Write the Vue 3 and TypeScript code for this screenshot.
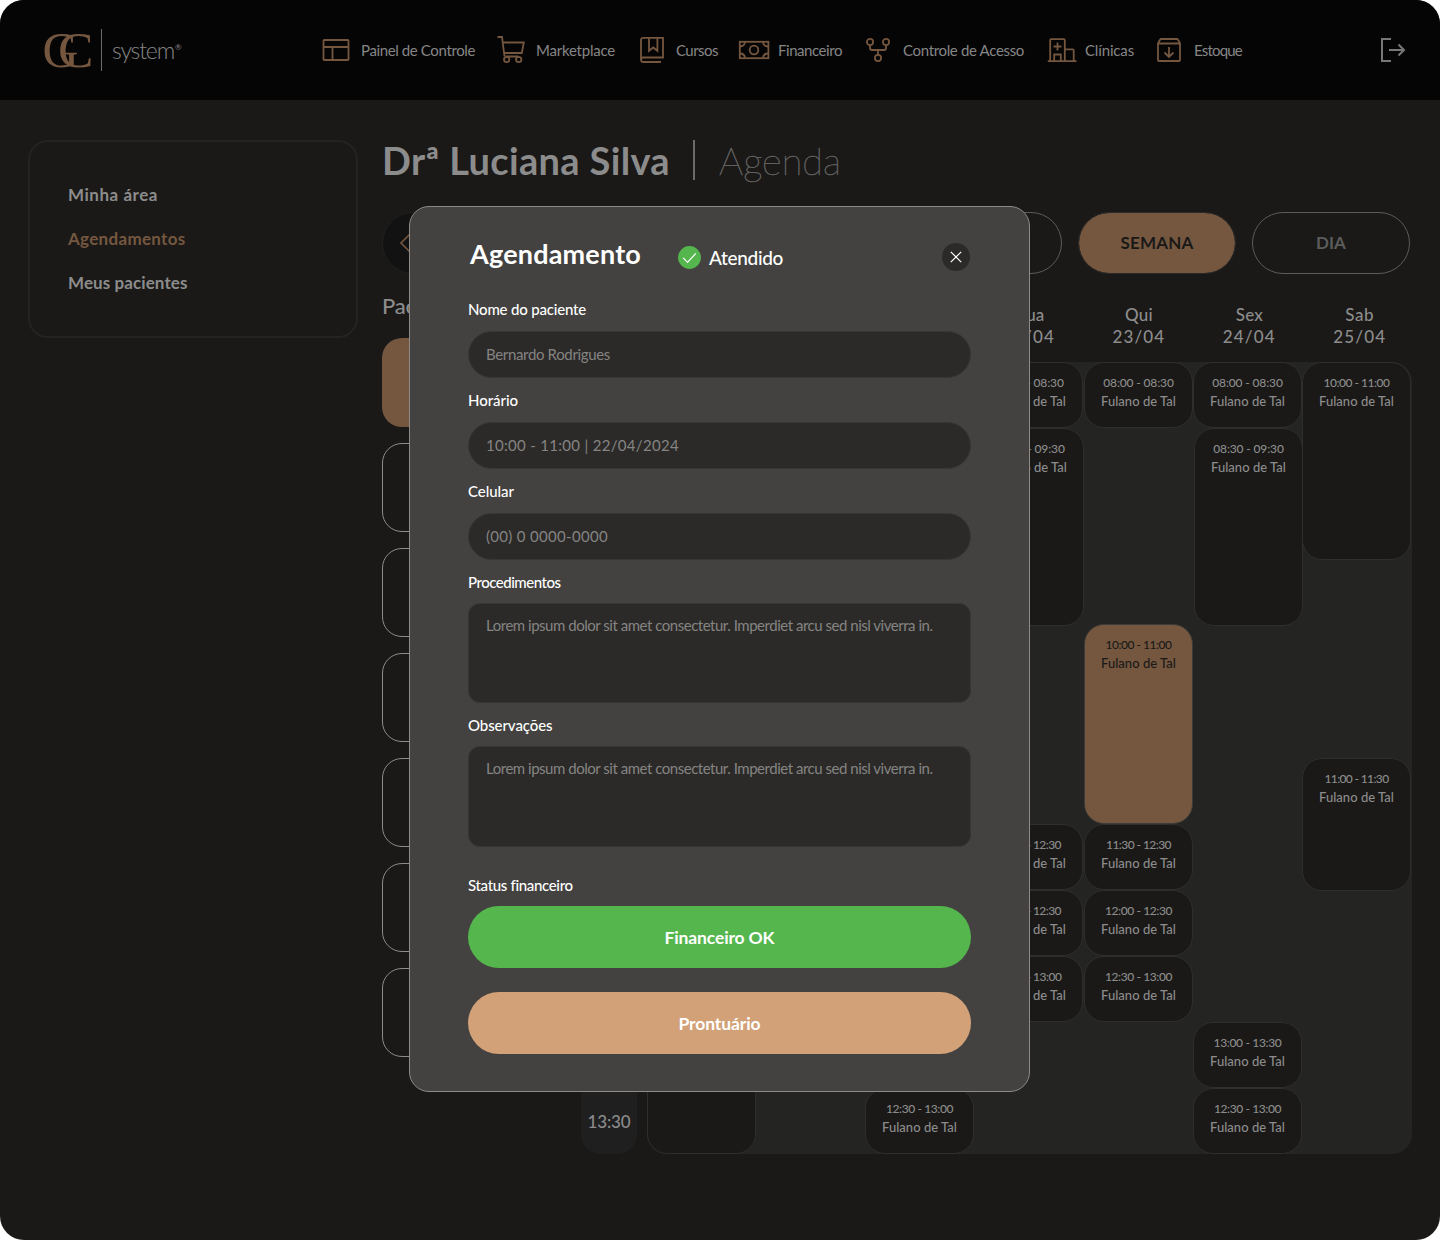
<script setup lang="ts">
interface NavItem { label: string; icon: string; box: number; gap: number; width: number; before: number }
interface Slot { day: number; row: number; span: number; time: string; timeWidth?: number; active?: boolean; shift?: boolean; blank?: boolean }

// Tracks a line of text so that it fills the given width in pixels.
const vFit = {
  mounted(el: HTMLElement, binding: { value: number }) {
    const range = document.createRange()
    range.selectNodeContents(el)
    const natural = range.getBoundingClientRect().width
    const count = (el.textContent ?? '').trim().length
    if (count) el.style.letterSpacing = `${((binding.value - natural) / count).toFixed(3)}px`
  },
}

const nav: NavItem[] = [
  { label: 'Painel de Controle', icon: 'panel', box: 28, gap: 11, width: 114, before: 0 },
  { label: 'Marketplace', icon: 'cart', box: 30, gap: 10, width: 79, before: 21 },
  { label: 'Cursos', icon: 'book', box: 26, gap: 11, width: 42, before: 24 },
  { label: 'Financeiro', icon: 'money', box: 32, gap: 8, width: 64, before: 20 },
  { label: 'Controle de Acesso', icon: 'fork', box: 26, gap: 12, width: 121, before: 23 },
  { label: 'Clínicas', icon: 'clinic', box: 30, gap: 8, width: 49, before: 23 },
  { label: 'Estoque', icon: 'box', box: 26, gap: 12, width: 48, before: 22 },
]

const menu = [
  { label: 'Minha área', width: 90, active: false },
  { label: 'Agendamentos', width: 117.5, active: true },
  { label: 'Meus pacientes', width: 119.5, active: false },
]

const days = [
  { name: 'Dom', date: '19/04' },
  { name: 'Seg', date: '20/04' },
  { name: 'Ter', date: '21/04' },
  { name: 'Qua', date: '22/04' },
  { name: 'Qui', date: '23/04' },
  { name: 'Sex', date: '24/04' },
  { name: 'Sab', date: '25/04' },
]
const nameWidths: Record<string, number> = { Qui: 28, Sex: 27, Sab: 29, Qua: 32 }

const hours = ['08:00', '08:30', '09:00', '09:30', '10:00', '10:30', '11:00', '11:30', '12:00', '12:30', '13:00', '13:30']

const slots: Slot[] = [
  { day: 1, row: 10, span: 3, time: '', blank: true },
  { day: 3, row: 12, span: 1, time: '12:30 - 13:00', timeWidth: 67 },
  { day: 4, row: 1, span: 1, time: '08:00 - 08:30' },
  { day: 4, row: 2, span: 3, time: '08:30 - 09:30', shift: true },
  { day: 4, row: 8, span: 1, time: '11:30 - 12:30', timeWidth: 65 },
  { day: 4, row: 9, span: 1, time: '12:00 - 12:30', timeWidth: 65 },
  { day: 4, row: 10, span: 1, time: '12:30 - 13:00', timeWidth: 66 },
  { day: 5, row: 1, span: 1, time: '08:00 - 08:30' },
  { day: 5, row: 5, span: 3, time: '10:00 - 11:00', timeWidth: 66, active: true },
  { day: 5, row: 8, span: 1, time: '11:30 - 12:30', timeWidth: 65 },
  { day: 5, row: 9, span: 1, time: '12:00 - 12:30', timeWidth: 67 },
  { day: 5, row: 10, span: 1, time: '12:30 - 13:00', timeWidth: 67 },
  { day: 6, row: 1, span: 1, time: '08:00 - 08:30' },
  { day: 6, row: 2, span: 3, time: '08:30 - 09:30', shift: true },
  { day: 6, row: 11, span: 1, time: '13:00 - 13:30', timeWidth: 68 },
  { day: 6, row: 12, span: 1, time: '12:30 - 13:00', timeWidth: 67 },
  { day: 7, row: 1, span: 3, time: '10:00 - 11:00', timeWidth: 66 },
  { day: 7, row: 7, span: 2, time: '11:00 - 11:30', timeWidth: 64 },
]

const fields = [
  { label: 'Nome do paciente', labelWidth: 118, value: 'Bernardo Rodrigues', width: 124, area: false },
  { label: 'Horário', labelWidth: 50, value: '10:00 - 11:00 | 22/04/2024', width: 193, area: false },
  { label: 'Celular', labelWidth: 46, value: '(00) 0 0000-0000', width: 122, area: false },
  { label: 'Procedimentos', labelWidth: 92.5, value: 'Lorem ipsum dolor sit amet consectetur. Imperdiet arcu sed nisl viverra in.', width: 446.5, area: true },
  { label: 'Observações', labelWidth: 84.5, value: 'Lorem ipsum dolor sit amet consectetur. Imperdiet arcu sed nisl viverra in.', width: 446.5, area: true },
]
</script>

<template>
  <div class="screen">
    <header class="topbar">
      <div class="brand">
        <svg class="monogram" width="52" height="42" viewBox="0 0 52 42">
          <text x="-0.500" y="37.500" textLength="36" lengthAdjust="spacingAndGlyphs">G</text>
          <text x="15" y="37.500" textLength="35.500" lengthAdjust="spacingAndGlyphs">C</text>
        </svg>
        <i class="brand-rule"></i>
        <span v-fit="62" class="brand-name">system</span><sup class="reg">®</sup>
      </div>
      <nav class="nav">
        <a v-for="n in nav" :key="n.label" class="nav-item" :style="{ marginLeft: n.before + 'px' }">
          <span class="nav-icon" :style="{ width: n.box + 'px', marginRight: n.gap + 'px' }">
            <svg v-if="n.icon === 'panel'" width="28" height="24" viewBox="0 0 28 24"><rect x="1.5" y="2" width="25" height="20" rx=".8" /><path d="M1.5 9h25M10.5 9v13" /></svg>
            <svg v-else-if="n.icon === 'cart'" width="30" height="30" viewBox="0 0 30 30"><path d="M1.500 2H6l2.500 19.500M7 7.500h20.800l-2 10.500H8M9.500 21.500h13" /><circle cx="10.700" cy="24.500" r="2.700" /><circle cx="22.700" cy="24.500" r="2.700" /></svg>
            <svg v-else-if="n.icon === 'book'" width="26" height="28" viewBox="0 0 26 28"><path d="M22 26H4.200a2.200 2.200 0 0 1-2.200-2.200V4a2.200 2.200 0 0 1 2.200-2.200H24V21.500H4.200A2.200 2.200 0 0 0 2 23.700M10 1.800v13l4.200-3.300 4.200 3.300v-13" /></svg>
            <svg v-else-if="n.icon === 'money'" width="32" height="20" viewBox="0 0 32 20"><rect x="1.800" y="1.800" width="28.600" height="16.400" /><circle cx="16" cy="10" r="4.300" /><path d="M7 2.200a5 5 0 0 1-5 4.300M25 2.200a5 5 0 0 0 5 4.300M7 17.800a5 5 0 0 0-5-4.300M25 17.800a5 5 0 0 1 5-4.300" /></svg>
            <svg v-else-if="n.icon === 'fork'" width="26" height="26" viewBox="0 0 26 26"><circle cx="5" cy="5" r="3.100" /><circle cx="21" cy="5" r="3.100" /><circle cx="13" cy="21" r="3.100" /><path d="M5 8.200V11a2 2 0 0 0 2 2h12a2 2 0 0 0 2-2V8.200M13 13v4.800" /></svg>
            <svg v-else-if="n.icon === 'clinic'" width="30" height="26" viewBox="0 0 30 26"><path d="M.8 24.100h28.700M3.200 24V3.200a1 1 0 0 1 1-1h12.600a1 1 0 0 1 1 1V24M17.800 12.300h7.900a1 1 0 0 1 1 1V24M7.200 24v-6.500h6.600V24M10.500 5.500v8M6.500 9.500h8" /></svg>
            <svg v-else width="26" height="26" viewBox="0 0 26 26"><path d="M2 6.200 4.200 2.500a1 1 0 0 1 .9-.5h15.800a1 1 0 0 1 .9.500L24 6.200V23a1 1 0 0 1-1 1H3a1 1 0 0 1-1-1ZM2 6.500h22M13 10v9.500M8.500 15.500l4.500 4.500 4.500-4.500" /></svg>
          </span>
          <span v-fit="n.width" class="nav-label" :style="{ width: n.width + 'px' }">{{ n.label }}</span>
        </a>
      </nav>
      <svg class="logout" width="26" height="26" viewBox="0 0 26 26"><path d="M11 2H2v22h9M9 13h15M18.500 7.500 24 13l-5.500 5.500" /></svg>
    </header>

    <main class="body">
      <aside class="side">
        <a v-for="m in menu" :key="m.label" :class="{ on: m.active }"><span v-fit="m.width">{{ m.label }}</span></a>
      </aside>

      <section class="content">
        <div class="heading">
          <h1 v-fit="288">Drª Luciana Silva</h1>
          <i></i>
          <h2 v-fit="122">Agenda</h2>
        </div>
        <div class="controls">
          <div class="period">
            <svg width="14" height="22" viewBox="0 0 14 22"><path d="M11 2 2 11l9 9" /></svg>
          </div>
          <div class="views">
            <button class="view"></button>
            <button class="view on"><span v-fit="73">SEMANA</span></button>
            <button class="view"><span v-fit="30">DIA</span></button>
          </div>
        </div>
        <div class="columns">
          <div class="patients">
            <h3>Pacientes</h3>
            <div v-for="i in 7" :key="i" class="patient" :class="{ on: i === 1 }"></div>
          </div>
          <div class="agenda">
            <div class="hours">
              <div v-for="h in hours" :key="h" class="hour"><span v-fit="43">{{ h }}</span></div>
            </div>
            <div class="week">
              <div class="days">
                <div v-for="d in days" :key="d.name" class="day">
                  <span v-fit="nameWidths[d.name] ?? 30">{{ d.name }}</span>
                  <span v-fit="53">{{ d.date }}</span>
                </div>
              </div>
              <div class="slots">
                <div
                  v-for="(s, i) in slots"
                  :key="i"
                  class="slot"
                  :class="{ active: s.active, shift: s.shift, last: s.day === 7, tall: s.span === 2 }"
                  :style="{ gridColumn: s.day, gridRow: `${s.row} / span ${s.span}` }"
                >
                  <template v-if="!s.blank">
                    <span v-fit="s.timeWidth ?? 70.5" class="time">{{ s.time }}</span>
                    <span v-fit="75" class="who">Fulano de Tal</span>
                  </template>
                </div>
              </div>
            </div>
          </div>
        </div>
      </section>
    </main>

    <div class="modal" role="dialog">
      <div class="modal-head">
        <h2 v-fit="171">Agendamento</h2>
        <div class="status">
          <svg width="23" height="23" viewBox="0 0 23 23"><circle cx="11.500" cy="11.500" r="11.400" fill="#54b64d" /><path d="m5.200 11.800 4.300 4.500 8.300-8.900" fill="none" stroke="#fff" stroke-width="1.200" /></svg>
          <span v-fit="74">Atendido</span>
        </div>
        <button class="close">
          <svg width="12" height="12" viewBox="0 0 12 12"><path d="m.8.800 10.400 10.400M11.200.800.800 11.200" /></svg>
        </button>
      </div>
      <template v-for="f in fields" :key="f.label">
        <label class="label"><span v-fit="f.labelWidth">{{ f.label }}</span></label>
        <div class="input" :class="{ area: f.area }"><span v-fit="f.width">{{ f.value }}</span></div>
      </template>
      <label class="label finance"><span v-fit="104.500">Status financeiro</span></label>
      <button class="action ok"><span v-fit="110">Financeiro OK</span></button>
      <button class="action record"><span v-fit="82">Prontuário</span></button>
    </div>
  </div>
</template>

<style>
body { background: #fff; }
</style>

<style scoped>
* { box-sizing: border-box; }
.screen {
  position: relative;
  width: 1440px;
  height: 1240px;
  overflow: hidden;
  border-radius: 24px;
  background: #1a1917;
  color: #8c8c8c;
  font-family: Lato, "Liberation Sans", sans-serif;
  white-space: nowrap;
}
h1, h2, h3 { margin: 0; }
button { padding: 0; border: 0; background: none; font: inherit; color: inherit; }
svg { display: block; flex: none; }

.topbar { display: flex; align-items: center; height: 100px; background: #050505; }
.brand { display: flex; align-items: center; width: 322px; padding-left: 43px; }
.monogram { overflow: visible; fill: #755740; font-family: "Liberation Serif", serif; font-size: 50px; }
.brand-rule { width: 1px; height: 42px; margin: 0 10px 0 6px; background: #6a6a6a; }
.brand-name { width: 63px; font-size: 23px; font-weight: 300; color: #858585; line-height: 30px; }
.reg { font-size: 8px; line-height: 8px; margin: -7px 0 0 0; color: #858585; }
.nav { display: flex; align-items: center; }
.nav-item { display: flex; align-items: center; }
.nav-icon { display: flex; justify-content: center; flex: none; }
.nav-icon svg { fill: none; stroke: #755740; stroke-width: 1.800; }
.nav-label { font-size: 15px; line-height: 22px; color: #858585; }
.logout { margin-left: auto; margin-right: 34px; fill: none; stroke: #777; stroke-width: 2; }

.body { display: flex; align-items: flex-start; padding: 40px 0 0 28px; }
.side { width: 330px; height: 198px; padding: 31px 38px; border: 2px solid #232322; border-radius: 20px; }
.side a { display: block; height: 44px; line-height: 43px; font-size: 17px; font-weight: 700; }
.side .on { color: #755740; }

.content { width: 1030px; margin-left: 24px; }
.heading { display: flex; align-items: center; height: 40px; }
.heading h1 { width: 289px; font-size: 38px; line-height: 40px; font-weight: 700; }
.heading i { width: 2px; height: 40px; margin: 0 24px 0 22px; background: #6a6a6a; }
.heading h2 { font-size: 38px; line-height: 44px; font-weight: 100; color: #606060; -webkit-text-stroke: .6px #606060; }
.controls { display: flex; justify-content: space-between; margin: 32px 2px 0 0; }
.period { display: flex; align-items: center; width: 360px; height: 62px; padding-left: 16px; border: 1px solid #202020; border-radius: 31px; background: #121212; }
.period svg { fill: none; stroke: #755740; stroke-width: 1.600; }
.views { display: flex; gap: 16px; }
.view { width: 158px; height: 62px; padding-bottom: 1px; border: 1px solid #5c5b5a; border-radius: 31px; font-size: 17px; font-weight: 700; color: #5c5c5c; }
.view.on { border-color: #2b2a28; background: #755740; background-clip: padding-box; color: #1a1917; }

.columns { display: flex; justify-content: space-between; }
.patients { width: 183px; }
.patients h3 { height: 64px; padding-top: 17px; font-size: 22px; line-height: 30px; font-weight: 500; letter-spacing: -.2px; }
.patient { height: 89px; margin-bottom: 16px; border: 1px solid #8c8c8c; border-radius: 20px; }
.patient.on { border: 0; background: #755740; }
.agenda { display: flex; gap: 10px; }
.hours { width: 56px; height: 792px; margin-top: 88px; border-radius: 20px; background: #1f1f20; }
.hour { display: flex; align-items: center; justify-content: center; height: 66px; font-size: 17px; font-weight: 500; }
.days { display: flex; width: 773px; height: 88px; padding-top: 30px; margin-left: -5px; }
.day { display: flex; flex-direction: column; align-items: center; flex: 1; font-size: 17px; line-height: 22px; font-weight: 500; }
.week { width: 765px; }
.slots { display: grid; grid-template-columns: repeat(7, 1fr); grid-template-rows: repeat(12, 66px); height: 792px; border-radius: 20px; background: #242422; }
.slot { display: flex; flex-direction: column; align-items: center; width: 109px; padding-top: 11px; border: 1px solid #2e2e2d; border-radius: 20px; background: #1a1917; }
.slot.shift { margin-left: 1px; }
.slot.last { margin-left: -1px; }
.slot.tall { margin-bottom: -1px; }
.slot.active { margin-top: -2px; background: #755740; border-color: #3d3a37; color: #1a1917; }
.time { font-size: 12px; line-height: 18px; font-weight: 500; }
.who { font-size: 13px; line-height: 18px; font-weight: 500; }

.modal {
  position: absolute;
  left: 409px;
  top: 206px;
  width: 621px;
  height: 886px;
  padding: 36px 58px 0;
  border: 1px solid #8c8b8a;
  border-radius: 20px;
  background: #434240;
  color: #fff;
}
.modal-head { display: flex; height: 54px; padding-left: 2px; }
.modal-head h2 { width: 172px; height: 24px; font-size: 27px; line-height: 22px; font-weight: 700; }
.status { display: flex; align-items: center; gap: 8px; height: 29px; margin-left: 36px; font-size: 19px; line-height: 23px; font-weight: 500; }
.status span { padding-bottom: 1px; }
.close { display: flex; align-items: center; justify-content: center; width: 28px; height: 28px; margin: 0 1px 0 auto; border-radius: 50%; background: #2b2a28; }
.close svg { fill: none; stroke: #fff; stroke-width: 1.200; }
.label { display: block; height: 24px; font-size: 15px; line-height: 24px; font-weight: 500; }
.input { height: 47px; margin: 10px 0; padding-left: 17px; border: 1px solid #373634; border-radius: 24px; background: #2b2a28; color: #858483; font-size: 15px; line-height: 45px; }
.input.area { height: 100px; margin: 9px 0 10px; border-radius: 12px; line-height: 42px; }
.input.area + .label + .input.area { height: 101px; }
.label.finance { margin-top: 26px; }
.action { display: block; width: 503px; height: 62px; border-radius: 31px; font-size: 17.500px; font-weight: 700; }
.ok { margin-top: 9px; background: #54b64d; }
.record { margin-top: 24px; background: #d2a178; }
</style>
